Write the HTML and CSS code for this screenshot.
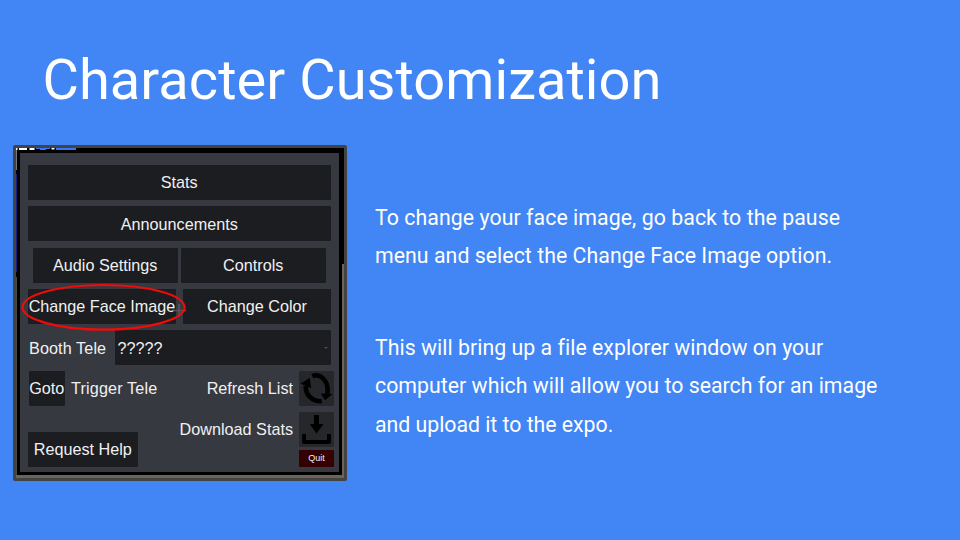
FILE: index.html
```
<!DOCTYPE html>
<html lang="en">
<head>
<meta charset="utf-8">
<title>Character Customization</title>
<link rel="stylesheet" href="styles.css">
</head>
<body>
<main class="slide">
  <h1 class="title">Character Customization</h1>
  <div class="content">
    <section class="shot">
      <svg class="scene" width="328" height="330" viewBox="0 0 328 330">
        <rect width="328" height="330" fill="#000"/>
        <path fill="#fff" d="M0 0h1.500v2H0zM3 0h8v2H3zM13.500 0h5v2h-5zM35.500 0h3v1.500h-3z"/>
        <path fill="#3478f6" d="M20 0h14v1h-4v1h-6V1h-4zM40 0h20v2H40z"/>
        <path fill="#77777a" d="M0 2h1v20H0z"/>
        <path fill="#172080" d="M0 26h1v98H0z"/>
        <path fill="#4b4943" d="M0 129h1v201H0z"/>
        <path fill="#6b6557" d="M326 116h2v214H0v-3h326z"/>
      </svg>
      <div class="menu">
        <div class="button stats">Stats</div>
        <div class="button">Announcements</div>
        <div class="row row-audio">
          <div class="button">Audio Settings</div>
          <div class="button">Controls</div>
        </div>
        <div class="row row-face">
          <div class="button">Change Face Image</div>
          <div class="button">Change Color</div>
        </div>
        <div class="row row-booth">
          <span class="label booth">Booth Tele</span>
          <div class="button dropdown">?????<i class="caret"></i></div>
        </div>
        <div class="lower">
          <div class="left">
            <div class="trigger">
              <div class="button goto">Goto</div>
              <span class="label tele">Trigger Tele</span>
            </div>
            <div class="button help">Request Help</div>
          </div>
          <div class="right">
            <div class="action">
              <span class="label">Refresh List</span>
              <svg class="icon" width="35" height="35" viewBox="0 0 35 35">
                <path d="M6.800 15C6 22.500 12.500 30.800 22.700 30.300M13.300 5.200C21 1.800 30.300 9.500 28.300 23" fill="none" stroke="#000" stroke-width="4.600"/>
                <path d="M1.500 12.500 10.700 7 12.200 17.300zM21.700 22.500 33.700 23 26 29.300z"/>
              </svg>
            </div>
            <div class="action">
              <span class="label">Download Stats</span>
              <svg class="icon" width="35" height="35" viewBox="0 0 35 35">
                <path d="M15 3h5v9h4.500L17.500 21.500 10.700 12H15z"/>
                <path d="M5 22V30H30V22" fill="none" stroke="#000" stroke-width="4" stroke-linejoin="round"/>
              </svg>
            </div>
            <div class="quit">Quit</div>
          </div>
        </div>
      </div>
      <svg class="mark" width="168" height="50" viewBox="0 0 168 50">
        <path d="M159 22v13M153 28.500h13" stroke="#55585e" stroke-width="1.500"/>
        <ellipse cx="83.500" cy="25.300" rx="81" ry="22.300" fill="none" stroke="#f10b0b" stroke-width="2.200"/>
      </svg>
    </section>
    <section class="copy">
      <p><span class="l1">To change your face image, go back to the pause</span><span class="l2">menu and select the Change Face Image option.</span></p>
      <p><span class="l3">This will bring up a file explorer window on your</span><span class="l4">computer which will allow you to search for an image</span><span class="l5">and upload it to the expo.</span></p>
    </section>
  </div>
</main>
</body>
</html>
```
FILE: styles.css
```
* { box-sizing: border-box; }
body { margin: 0; }
.slide {
  width: 960px;
  height: 540px;
  overflow: hidden;
  background: #4285f4;
  color: #fff;
  font-family: Roboto, sans-serif;
}
.title {
  margin: 0;
  padding: 46px 0 0 42.500px;
  height: 145px;
  font-size: 56px;
  line-height: 68px;
  font-weight: 400;
  letter-spacing: 0.040px;
  white-space: nowrap;
}
.content { display: flex; padding-left: 13px; }
.shot {
  position: relative;
  width: 334px;
  height: 336px;
  border: 3px solid #434343;
  border-radius: 2px;
  padding: 5px 0 0 4px;
  font-family: "Liberation Sans", Arial, sans-serif;
  font-size: 16.2px;
  color: #f0f0f0;
}
.scene { position: absolute; left: 0; top: 0; }
.menu {
  position: relative;
  width: 318.500px;
  height: 319px;
  padding: 12px 8px 0;
  background: #373940;
  display: flex;
  flex-direction: column;
  gap: 6.300px;
}
.button {
  flex: none;
  display: flex;
  align-items: center;
  justify-content: center;
  height: 35px;
  padding-top: 1px;
  border-radius: 1px;
  background: #1c1d20;
  white-space: nowrap;
}
.stats { padding-top: 0; }
.row { display: flex; height: 35px; }
.row-audio { padding: 0 5px; gap: 3.500px; }
.row-face { gap: 7px; }
.row-audio .button { width: 144.500px; }
.row-face .button { width: 148px; }
.row-booth { align-items: center; justify-content: space-between; padding-left: 1px; }
.label { padding-top: 1px; white-space: nowrap; }
.booth { letter-spacing: 0.100px; }
.tele { letter-spacing: 0.150px; }
.dropdown { width: 216px; justify-content: space-between; padding: 1px 3px 0; }
.caret { border: 2px solid transparent; border-top-color: #4b4d50; border-bottom: 0; }
.lower { display: flex; justify-content: space-between; margin: -0.700px -3.500px 0 0; }
.left { display: flex; flex-direction: column; gap: 26px; }
.trigger { display: flex; align-items: center; gap: 6.500px; padding-left: 1px; }
.goto { width: 35.500px; }
.help { width: 109.500px; }
.right { display: flex; flex-direction: column; gap: 6px; align-items: flex-end; }
.action { display: flex; align-items: center; gap: 6px; }
.icon { display: block; background: #25272b; border-radius: 1px; }
.quit {
  width: 35px;
  height: 17px;
  margin-top: -3px;
  border-radius: 1px;
  background: #340002;
  font-size: 9px;
  line-height: 17px;
  text-align: center;
}
.mark { position: absolute; left: 4px; top: 134px; }
.copy {
  padding: 54px 0 0 28px;
  font-size: 21.300px;
  line-height: 38.300px;
}
.copy p { margin: 0 0 53.500px; }
.copy span { display: block; width: max-content; white-space: nowrap; }
.l1 { letter-spacing: 0.060px; }
.l2 { letter-spacing: 0.040px; }
.l3 { letter-spacing: 0.030px; }
.l4 { letter-spacing: 0.020px; }
.l5 { letter-spacing: -0.030px; }
```
